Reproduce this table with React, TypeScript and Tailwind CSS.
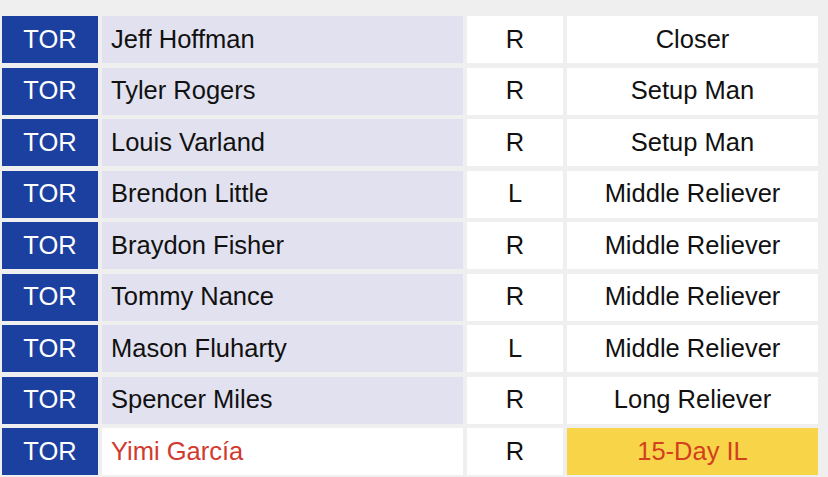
type Pitcher = {
  team: string;
  name: string;
  hand: string;
  role: string;
  injured?: boolean;
};

const bullpen: Pitcher[] = [
  { team: "TOR", name: "Jeff Hoffman", hand: "R", role: "Closer" },
  { team: "TOR", name: "Tyler Rogers", hand: "R", role: "Setup Man" },
  { team: "TOR", name: "Louis Varland", hand: "R", role: "Setup Man" },
  { team: "TOR", name: "Brendon Little", hand: "L", role: "Middle Reliever" },
  { team: "TOR", name: "Braydon Fisher", hand: "R", role: "Middle Reliever" },
  { team: "TOR", name: "Tommy Nance", hand: "R", role: "Middle Reliever" },
  { team: "TOR", name: "Mason Fluharty", hand: "L", role: "Middle Reliever" },
  { team: "TOR", name: "Spencer Miles", hand: "R", role: "Long Reliever" },
  { team: "TOR", name: "Yimi García", hand: "R", role: "15-Day IL", injured: true },
];

const App: React.FC = () => {
  return (
    <div
      className="w-[828px] h-[477px] bg-[#efefef] pt-4 pl-[2px] pr-[10px] overflow-hidden text-[25.5px] leading-none"
      style={{ fontFamily: '"Liberation Sans", Arial, sans-serif' }}
    >
      <div className="grid grid-cols-[96px_361px_96px_251px] gap-x-1 gap-y-[4.5px] auto-rows-[47px]">
        {bullpen.map((p) => (
          <div key={p.name} className="contents">
            <div className="flex items-center justify-center bg-[#1b40a0] text-white">
              {p.team}
            </div>
            <div
              className={
                p.injured
                  ? "flex items-center pl-[9px] bg-white text-[#d13b2f]"
                  : "flex items-center pl-[9px] bg-[#e1e1ef] text-[#111]"
              }
            >
              {p.name}
            </div>
            <div className="flex items-center justify-center bg-white text-[#111]">
              {p.hand}
            </div>
            <div
              className={
                p.injured
                  ? "flex items-center justify-center bg-[#f8d548] text-[#d2401f]"
                  : "flex items-center justify-center bg-white text-[#111]"
              }
            >
              {p.role}
            </div>
          </div>
        ))}
      </div>
    </div>
  );
};

export default App;
